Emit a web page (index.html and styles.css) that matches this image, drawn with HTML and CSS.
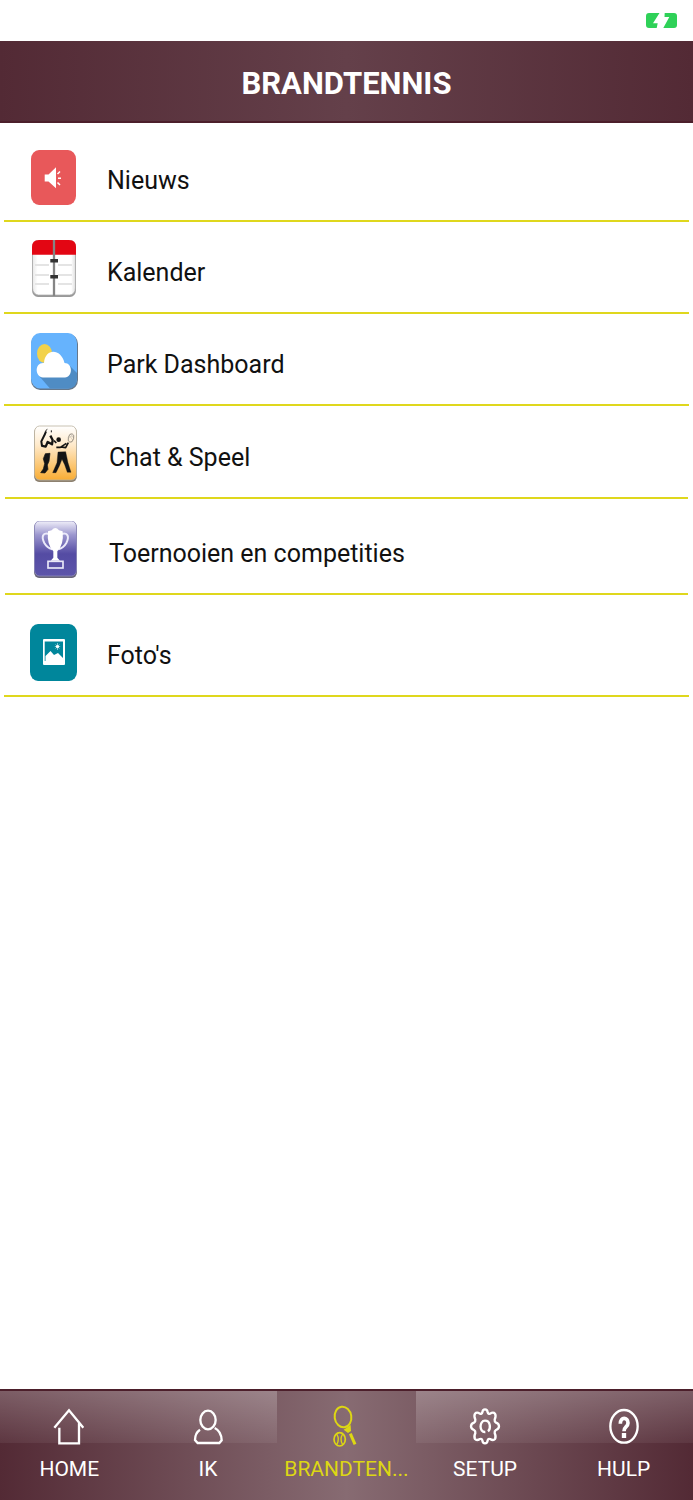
FILE: index.html
```html
<!DOCTYPE html>
<html lang="nl">
<head>
<meta charset="utf-8">
<meta name="viewport" content="width=device-width, initial-scale=1">
<title>Brandtennis</title>
<link rel="stylesheet" href="styles.css">
</head>
<body>
<div class="status">
  <svg class="battery" viewBox="0 0 31 15" role="img" aria-label="Batterij laadt op">
    <path d="M3 0H13.500L7 10.300H11.700L10.700 15H3Q0 15 0 12V3Q0 0 3 0Z"/>
    <path d="M18.700 0H28Q31 0 31 3V12Q31 15 28 15H17.300L23.300 4H18.500Z"/>
  </svg>
</div>
<header class="header"><h1 class="title">BRANDTENNIS</h1></header>
<main class="main">
  <ul class="menu">
    <li class="item item-first"><a class="link" href="#nieuws">
      <svg class="icon" viewBox="0 0 48 58" aria-hidden="true">
        <rect x="1" y="2" width="45" height="55" rx="8" ry="9" fill="#e8585a"/>
        <path d="M14.700 26.500H18.500L26 19.300V40.300L18.500 33.500H14.700Z" fill="#fff"/>
        <path d="M27.500 26L30 23.500M28 30.200H31M27.500 34.500L30 37" stroke="#fff" stroke-width="1.500" fill="none"/>
      </svg><span class="label">Nieuws</span></a></li>
    <li class="item"><a class="link" href="#kalender">
      <svg class="icon" viewBox="0 0 48 58" aria-hidden="true">
        <defs><linearGradient id="paper" x1="0" x2="1"><stop offset="0" stop-color="#e8e8e8"/><stop offset=".12" stop-color="#fff"/><stop offset=".9" stop-color="#fff"/><stop offset="1" stop-color="#ddd"/></linearGradient></defs>
        <rect x="2" y="1" width="44" height="56" rx="6" ry="7" fill="#999"/>
        <rect x="2.500" y="0" width="43" height="55" rx="6" ry="7" fill="url(#paper)" stroke="#aaa" stroke-width=".7"/>
        <path d="M2 14.800V7Q2 0 9 0H39Q46 0 46 7V14.800Z" fill="#e30613"/>
        <path d="M5 25H19M28 25H42M5 35H19M28 35H42M5 44H19M28 44H42" stroke="#e4e4e4" stroke-width="2"/>
        <path d="M24 0V56" stroke="#858585" stroke-width="2.300"/>
        <path d="M20.300 20.700H28M20.300 36.700H28" stroke="#333" stroke-width="3.500"/>
      </svg><span class="label">Kalender</span></a></li>
    <li class="item"><a class="link" href="#park">
      <svg class="icon" viewBox="0 0 48 58" aria-hidden="true">
        <rect x="1" y="2" width="47" height="56" rx="9" ry="10" fill="#66778a"/>
        <rect x="1" y="1" width="46" height="55.500" rx="9" ry="10" fill="#66b3fd"/>
        <path d="M10 45L20 56.500H38Q47 56.500 47 46V41L40 34Z" fill="#4f8cc4"/>
        <ellipse cx="14.500" cy="21.500" rx="7.500" ry="9.500" fill="#f2d24b"/>
        <path d="M13 45.500C4 44 5 30 14 31C15 16 31 16 34.500 31C43 31 43 45 35 45.500Z" fill="#fff"/>
      </svg><span class="label">Park Dashboard</span></a></li>
    <li class="item item-inset"><a class="link" href="#chat">
      <svg class="icon" viewBox="0 0 48 58" aria-hidden="true">
        <defs><linearGradient id="amber" x2="0" y2="1"><stop offset="0" stop-color="#fff"/><stop offset=".35" stop-color="#ffeacb"/><stop offset="1" stop-color="#f9ad34"/></linearGradient></defs>
        <rect x="2" y="2" width="43" height="55" rx="5" ry="6" fill="#8d8170"/>
        <rect x="2.500" y="1" width="42" height="54" rx="5" ry="6" fill="url(#amber)" stroke="#bbb29f" stroke-width=".8"/>
        <g transform="translate(-12 -5) scale(.3333)" fill="none" stroke="#141414" stroke-linejoin="round">
          <path d="M66 78L64 64L75 42L78 34" stroke-width="6"/>
          <path d="M64 77L77 80L83 66L96 73L98 60L91 47" stroke-width="7"/>
          <path d="M76 33L82 28M94 37V31" stroke-width="3"/>
          <path d="M76 101L90 100L87 124L82 135L84 148L75 159L62 158L70 147L74 131L70 116Z" fill="#141414" stroke-width="2"/>
          <circle cx="116" cy="59" r="7" fill="#141414" stroke="none"/>
          <path d="M109 82L121 82L139 70M122 81L137 83L145 68M109 69L102 62" stroke-width="5"/>
          <ellipse cx="153" cy="54" rx="8" ry="13" stroke="#746d64" stroke-width="2" transform="rotate(15 153 54)"/>
          <path d="M147 45L158 60M151 42L161 54M145 54L158 47" stroke="#9b9488" stroke-width="1"/>
          <path d="M114 96L137 95L144 128L153 157H142L134 134L126 118L118 138L108 158H98L111 128Z" fill="#141414" stroke-width="1"/>
        </g>
      </svg><span class="label">Chat &amp; Speel</span></a></li>
    <li class="item item-inset item-tall"><a class="link" href="#toernooien">
      <svg class="icon" viewBox="0 0 48 58" aria-hidden="true">
        <defs><linearGradient id="violet" x2="0" y2="1"><stop offset="0" stop-color="#f0eff9"/><stop offset=".25" stop-color="#9c97cf"/><stop offset=".6" stop-color="#544ba3"/><stop offset="1" stop-color="#5d55aa"/></linearGradient></defs>
        <rect x="2" y="1" width="43" height="56" rx="5" ry="6" fill="#686579"/>
        <rect x="2.500" y="0" width="42" height="55" rx="5" ry="6" fill="url(#violet)" stroke="#8e8abd" stroke-width=".8"/>
        <g transform="translate(-12 -6) scale(.3333)">
          <path d="M88 57C67 51 64 66 73 84Q81 98 97 103M124 57C145 51 148 66 139 84Q131 98 115 103" fill="none" stroke="#ebeafa" stroke-width="6"/>
          <path d="M84 49L95 46Q106 32 117 46L128 49Q132 90 112 109V128L120 137H92L100 128V109Q80 90 84 49Z" fill="#fff"/>
          <rect x="84" y="139" width="45" height="20" fill="#5a51a7" stroke="#e9e8f7" stroke-width="5"/>
        </g>
      </svg><span class="label">Toernooien en competities</span></a></li>
    <li class="item item-last"><a class="link" href="#fotos">
      <svg class="icon" viewBox="0 0 48 58" aria-hidden="true">
        <rect x="0" y="1" width="47" height="57" rx="8" ry="9" fill="#00869b"/>
        <rect x="13" y="16" width="22" height="26" rx="1" fill="#fff"/>
        <path d="M14.700 18.500H33V38H14.700Z" fill="#00869b"/>
        <path d="M15.500 38V33L20.500 28L24 32L28 30L33 35V38Z" fill="#fff"/>
        <circle cx="27.500" cy="23.500" r="1.600" fill="#fff"/>
        <path d="M27.500 20V27M24.800 23.500H30.200M25.500 21.300L29.500 25.700M29.500 21.300L25.500 25.700" stroke="#fff" stroke-width=".5"/>
      </svg><span class="label">Foto's</span></a></li>
  </ul>
</main>
<nav class="tabs" aria-label="Hoofdmenu">
  <a class="tab" href="#home">
    <svg class="tab-icon" viewBox="153 75 108 126" aria-hidden="true"><path d="M178 143V190H237V130M163 143L207 91L250 143"/></svg>
    <span class="tab-label">HOME</span></a>
  <a class="tab" href="#ik">
    <svg class="tab-icon" viewBox="567 75 108 126" aria-hidden="true"><ellipse cx="621" cy="120" rx="23" ry="28"/><path d="M597 149Q582 159 582 180L590 189H655L662 181Q661 154 641 144"/></svg>
    <span class="tab-label">IK</span></a>
  <a class="tab tab-active" href="#brandtennis" aria-current="page">
    <svg class="tab-icon" viewBox="294 75 108 126" aria-hidden="true">
      <ellipse cx="339" cy="111" rx="25" ry="31" transform="rotate(-8 339 111)" stroke-width="6"/>
      <path d="M341 149L362 135L363 153L354 159Z" fill="currentColor" stroke="none"/>
      <path d="M361 161L375 193" stroke-width="9"/>
      <ellipse cx="329" cy="178" rx="17" ry="20" stroke-width="5"/><path d="M320 162Q330 178 320 194M338 162Q328 178 338 194" stroke-width="4"/></svg>
    <span class="tab-label">BRANDTEN...</span></a>
  <a class="tab" href="#setup">
    <svg class="tab-icon" viewBox="48 75 108 126" aria-hidden="true">
      <path d="M94 97Q95 88 102 88Q109 88 110 97Q112 103 117 101Q127 95 132 101Q136 107 131 119Q130 125 135 128Q144 131 144 139Q144 147 135 150Q130 153 131 159Q136 171 132 177Q127 183 117 177Q112 175 110 181Q109 190 102 190Q95 190 94 181Q92 175 87 177Q77 183 72 177Q68 171 73 159Q74 153 69 150Q60 147 60 139Q60 131 69 128Q74 125 73 119Q68 107 72 101Q77 95 87 101Q92 103 94 97Z"/>
      <path d="M103 156C84 158 84 122 102 122C119 122 120 147 111 154"/></svg>
    <span class="tab-label">SETUP</span></a>
  <a class="tab" href="#hulp">
    <svg class="tab-icon" viewBox="474 75 108 126" aria-hidden="true"><ellipse cx="528" cy="139" rx="41" ry="49"/><path d="M517 131C517 109 540 111 540 129C540 141 528 139 528 154" stroke-width="11"/><path d="M528 159V174" stroke-width="13"/></svg>
    <span class="tab-label">HULP</span></a>
</nav>
</body>
</html>
```
FILE: styles.css
```css
* { box-sizing: border-box; }

body {
  margin: 0;
  min-height: 100vh;
  display: flex;
  flex-direction: column;
  background: #fff;
  color: #111;
  font-family: Roboto, "Liberation Sans", sans-serif;
}

.status {
  height: 41px;
  display: flex;
  align-items: center;
  justify-content: flex-end;
  padding: 0 16px;
}

.battery { width: 31px; height: 15px; fill: #2fd158; }

.header {
  padding: 25px 16px 19px;
  background: linear-gradient(90deg, #532a35, #64404a 50%, #532a35);
  border-bottom: 2px solid #4c1f2b;
  text-align: center;
}

.title {
  margin: 0;
  color: #fff;
  font-size: 31px;
  line-height: 36px;
  font-weight: 700;
}

.main { flex: 1; }

.menu { margin: 0; padding: 0; list-style: none; }

.item {
  margin: 0 4px;
  padding: 18px 26px 14px;
  border-bottom: 2px solid #dfd71d;
}

.item-first { padding-top: 25px; }
.item-inset { margin: 0 5px; padding: 19px 27px 14px; }
.item-tall { padding-top: 22px; }
.item-last { padding-top: 28px; }

.link {
  display: flex;
  align-items: center;
  gap: 29px;
  color: inherit;
  text-decoration: none;
}

.icon { flex: none; width: 48px; height: 58px; }

.label { margin-top: 8px; font-size: 25px; line-height: 30px; }

.tabs {
  display: grid;
  grid-template-columns: repeat(5, minmax(0, 1fr));
  border-top: 2px solid #4c1f2b;
  background:
    linear-gradient(rgb(255 255 255 / 24%), rgb(255 255 255 / 6%)) left top / 40% 52px no-repeat,
    linear-gradient(rgb(255 255 255 / 24%), rgb(255 255 255 / 6%)) right top / 40% 52px no-repeat,
    linear-gradient(90deg, #532a35, #876b72 50%, #532a35);
}

.tab {
  display: flex;
  flex-direction: column;
  align-items: center;
  gap: 8px;
  padding: 14px 6px 17px;
  color: #fff;
  text-decoration: none;
}

.tab-active { color: #ddd713; }

.tab-icon {
  width: 36px;
  height: 42px;
  fill: none;
  stroke: currentColor;
  stroke-width: 7;
}

.tab-label {
  font-size: 21px;
  line-height: 28px;
  white-space: nowrap;
}
```
